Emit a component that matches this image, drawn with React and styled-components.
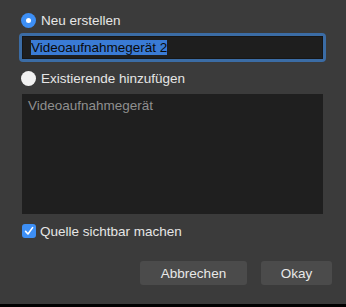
import styled, { createGlobalStyle } from "styled-components";

const GlobalStyle = createGlobalStyle`
  html, body {
    margin: 0;
    padding: 0;
    background: #000;
  }
  body {
    font-family: "Liberation Sans", Arial, sans-serif;
  }
`;

const Dialog = styled.div`
  width: 346px;
  height: 304px;
  box-sizing: border-box;
  background-color: #3b3b3b;
  padding: 13px 20px 0 19px;
  display: flex;
  flex-direction: column;
  color: #e6e6e6;
  font-size: 13.5px;
`;

const OptionRow = styled.label`
  display: flex;
  align-items: center;
  gap: 5px;
  height: 15px;
  padding-left: 2px;
  margin-top: ${(p) => p.$top || 0}px;
`;

const Radio = styled.span`
  width: 15px;
  height: 15px;
  border-radius: 50%;
  box-sizing: border-box;
  flex-shrink: 0;
  display: flex;
  align-items: center;
  justify-content: center;
  background: ${(p) => (p.$checked ? "#3d8ff5" : "#f2f2f2")};

  &::after {
    content: "";
    width: 5px;
    height: 5px;
    border-radius: 50%;
    background: #fff;
    display: ${(p) => (p.$checked ? "block" : "none")};
  }
`;

const FocusRing = styled.div`
  margin-top: 5px;
  border: 3px solid #3b6ca5;
  border-radius: 4px;
  height: 29px;
  box-sizing: border-box;
  width: 307px;
`;

const Field = styled.div`
  height: 100%;
  background: #1e1e1e;
  box-sizing: border-box;
  border: 1px solid #161616;
  padding-left: 8px;
  display: flex;
  align-items: center;
`;

const Selected = styled.span`
  background: #3a7bd5;
  color: #0a0a0a;
  line-height: 15px;
`;

const ListBox = styled.div`
  margin: 8px 0 0 3px;
  width: 301px;
  height: 120px;
  background: #1f1f1f;
  box-sizing: border-box;
  padding: 4px 6px;
  color: #8f8f8f;
`;

const CheckRow = styled.label`
  display: flex;
  align-items: center;
  gap: 4px;
  margin: 10px 0 0 3px;
  height: 14px;
`;

const Checkbox = styled.span`
  width: 14px;
  height: 14px;
  border-radius: 3px;
  background: #3d8ff5;
  display: flex;
  align-items: center;
  justify-content: center;
`;

const Footer = styled.div`
  display: flex;
  justify-content: flex-end;
  gap: 14px;
  margin-top: 23px;
  margin-right: -6px;
`;

const Button = styled.button`
  width: ${(p) => p.$w}px;
  height: 24px;
  border: none;
  border-radius: 3px;
  background: #4b4b4b;
  color: #e8e8e8;
  font-family: inherit;
  font-size: 13.5px;
  padding: 0;
`;

export default function App() {
  return (
    <>
      <GlobalStyle />
      <Dialog>
        <OptionRow>
          <Radio $checked />
          Neu erstellen
        </OptionRow>
        <FocusRing>
          <Field>
            <Selected>Videoaufnahmegerät 2</Selected>
          </Field>
        </FocusRing>
        <OptionRow $top={9}>
          <Radio />
          Existierende hinzufügen
        </OptionRow>
        <ListBox>Videoaufnahmegerät</ListBox>
        <CheckRow>
          <Checkbox>
            <svg width="10" height="10" viewBox="0 0 10 10">
              <path
                d="M1.6 5.4 L4 8 L8.6 1.6"
                fill="none"
                stroke="#fff"
                strokeWidth="1.6"
                strokeLinecap="round"
                strokeLinejoin="round"
              />
            </svg>
          </Checkbox>
          Quelle sichtbar machen
        </CheckRow>
        <Footer>
          <Button $w={107}>Abbrechen</Button>
          <Button $w={71}>Okay</Button>
        </Footer>
      </Dialog>
    </>
  );
}
